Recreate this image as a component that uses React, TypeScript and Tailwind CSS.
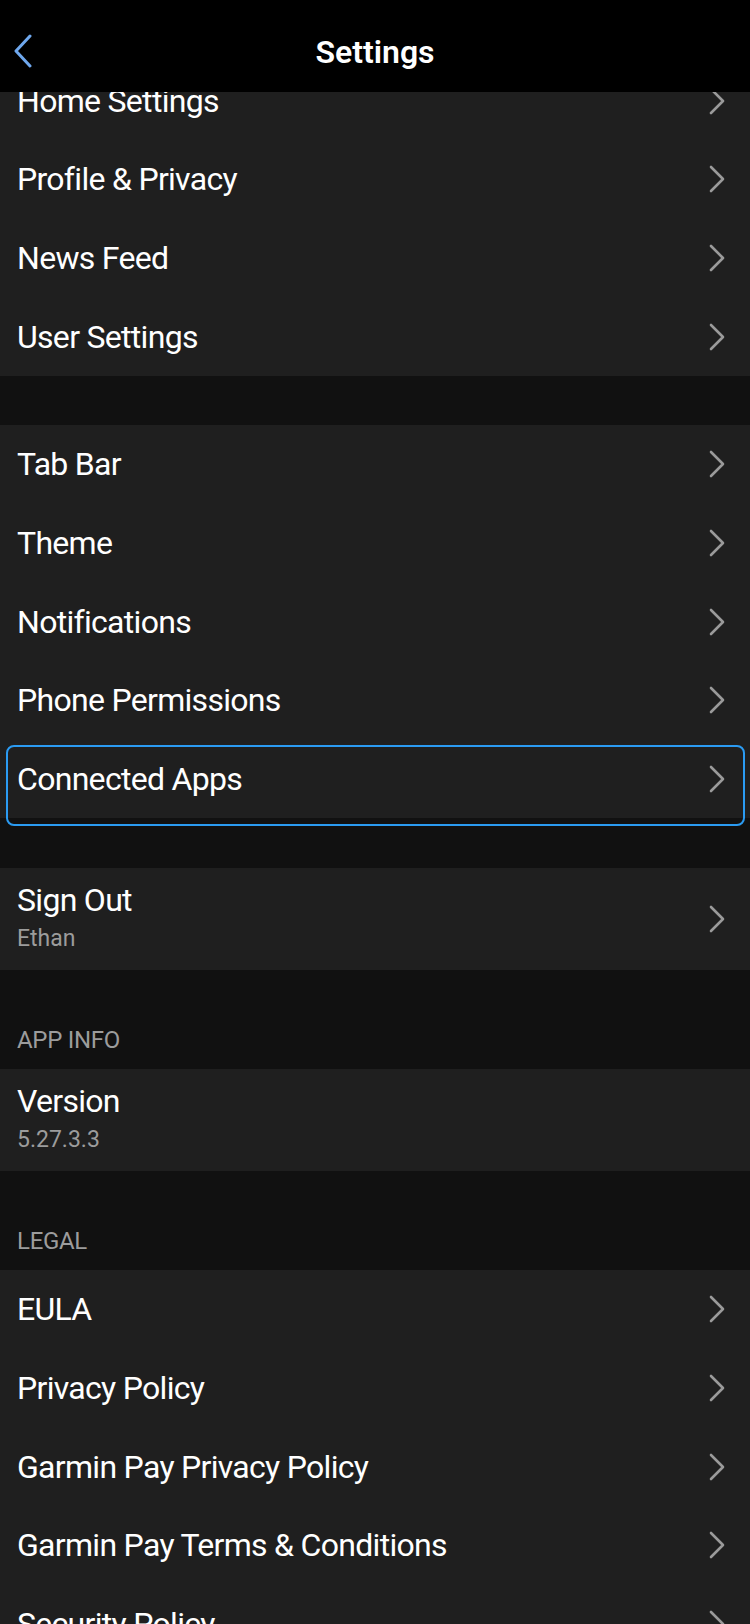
import React from 'react';

type Row = { label: string; sub?: string; chevron?: boolean; focused?: boolean };

const groupOne: Row[] = [
  { label: 'Home Settings', chevron: true },
  { label: 'Profile & Privacy', chevron: true },
  { label: 'News Feed', chevron: true },
  { label: 'User Settings', chevron: true },
];

const groupTwo: Row[] = [
  { label: 'Tab Bar', chevron: true },
  { label: 'Theme', chevron: true },
  { label: 'Notifications', chevron: true },
  { label: 'Phone Permissions', chevron: true },
  { label: 'Connected Apps', chevron: true, focused: true },
];

const legal: Row[] = [
  { label: 'EULA', chevron: true },
  { label: 'Privacy Policy', chevron: true },
  { label: 'Garmin Pay Privacy Policy', chevron: true },
  { label: 'Garmin Pay Terms & Conditions', chevron: true },
  { label: 'Security Policy', chevron: true },
];

function Chevron() {
  return (
    <svg width="16" height="28" viewBox="0 0 16 28" fill="none" className="shrink-0">
      <path d="M2 2 L14 14 L2 26" stroke="#9a9a9a" strokeWidth="2.6" strokeLinecap="round" strokeLinejoin="round" />
    </svg>
  );
}

function SettingsRow({ row }: { row: Row }) {
  return (
    <div className="relative flex h-[78.67px] items-center justify-between pl-[17px] pr-[25px]">
      <span className="text-[32px] leading-none tracking-[-0.7px] text-white">{row.label}</span>
      {row.chevron && <Chevron />}
      {row.focused && (
        <div className="pointer-events-none absolute left-[6px] right-[5px] top-[5px] h-[81px] rounded-[8px] border-[2.5px] border-[#2b9bf2]" />
      )}
    </div>
  );
}

function DetailRow({ label, sub, chevron }: Row) {
  return (
    <div className="flex h-[102px] items-center justify-between pl-[17px] pr-[25px] bg-[#1f1f1f]">
      <div className="flex -translate-y-[2px] flex-col">
        <span className="text-[32px] leading-none tracking-[-0.7px] text-white">{label}</span>
        <span className="mt-[11px] text-[23px] leading-none text-[#9c9c9c]">{sub}</span>
      </div>
      {chevron && <Chevron />}
    </div>
  );
}

function SectionHeader({ title }: { title: string }) {
  return (
    <div className="flex h-[99px] items-end pb-[17px] pl-[17px]">
      <span className="text-[24px] leading-none uppercase tracking-[-0.3px] text-[#9c9c9c]">{title}</span>
    </div>
  );
}

export default function App() {
  return (
    <div className="flex h-[1624px] w-[750px] flex-col overflow-hidden bg-[#111111] font-['Roboto',sans-serif]">
      <header className="relative z-10 flex h-[92px] shrink-0 items-center justify-center bg-black pt-[12px]">
        <svg width="22" height="34" viewBox="0 0 22 34" fill="none" className="absolute left-[12px] top-[34px]">
          <path d="M18 2 L4 17 L18 32" stroke="#6fa8ee" strokeWidth="3" strokeLinecap="round" strokeLinejoin="round" />
        </svg>
        <h1 className="text-[32px] font-semibold leading-none text-white">Settings</h1>
      </header>

      <main className="flex-1 overflow-hidden">
        <div className="-mt-[30.7px]">
          <section className="bg-[#1f1f1f]">
            {groupOne.map((r) => (
              <SettingsRow key={r.label} row={r} />
            ))}
          </section>

          <div className="h-[49px]" />

          <section className="bg-[#1f1f1f]">
            {groupTwo.map((r) => (
              <SettingsRow key={r.label} row={r} />
            ))}
          </section>

          <div className="h-[49.7px]" />

          <DetailRow label="Sign Out" sub="Ethan" chevron />

          <SectionHeader title="App Info" />
          <DetailRow label="Version" sub="5.27.3.3" />

          <SectionHeader title="Legal" />
          <section className="bg-[#1f1f1f]">
            {legal.map((r) => (
              <SettingsRow key={r.label} row={r} />
            ))}
          </section>
        </div>
      </main>
    </div>
  );
}
